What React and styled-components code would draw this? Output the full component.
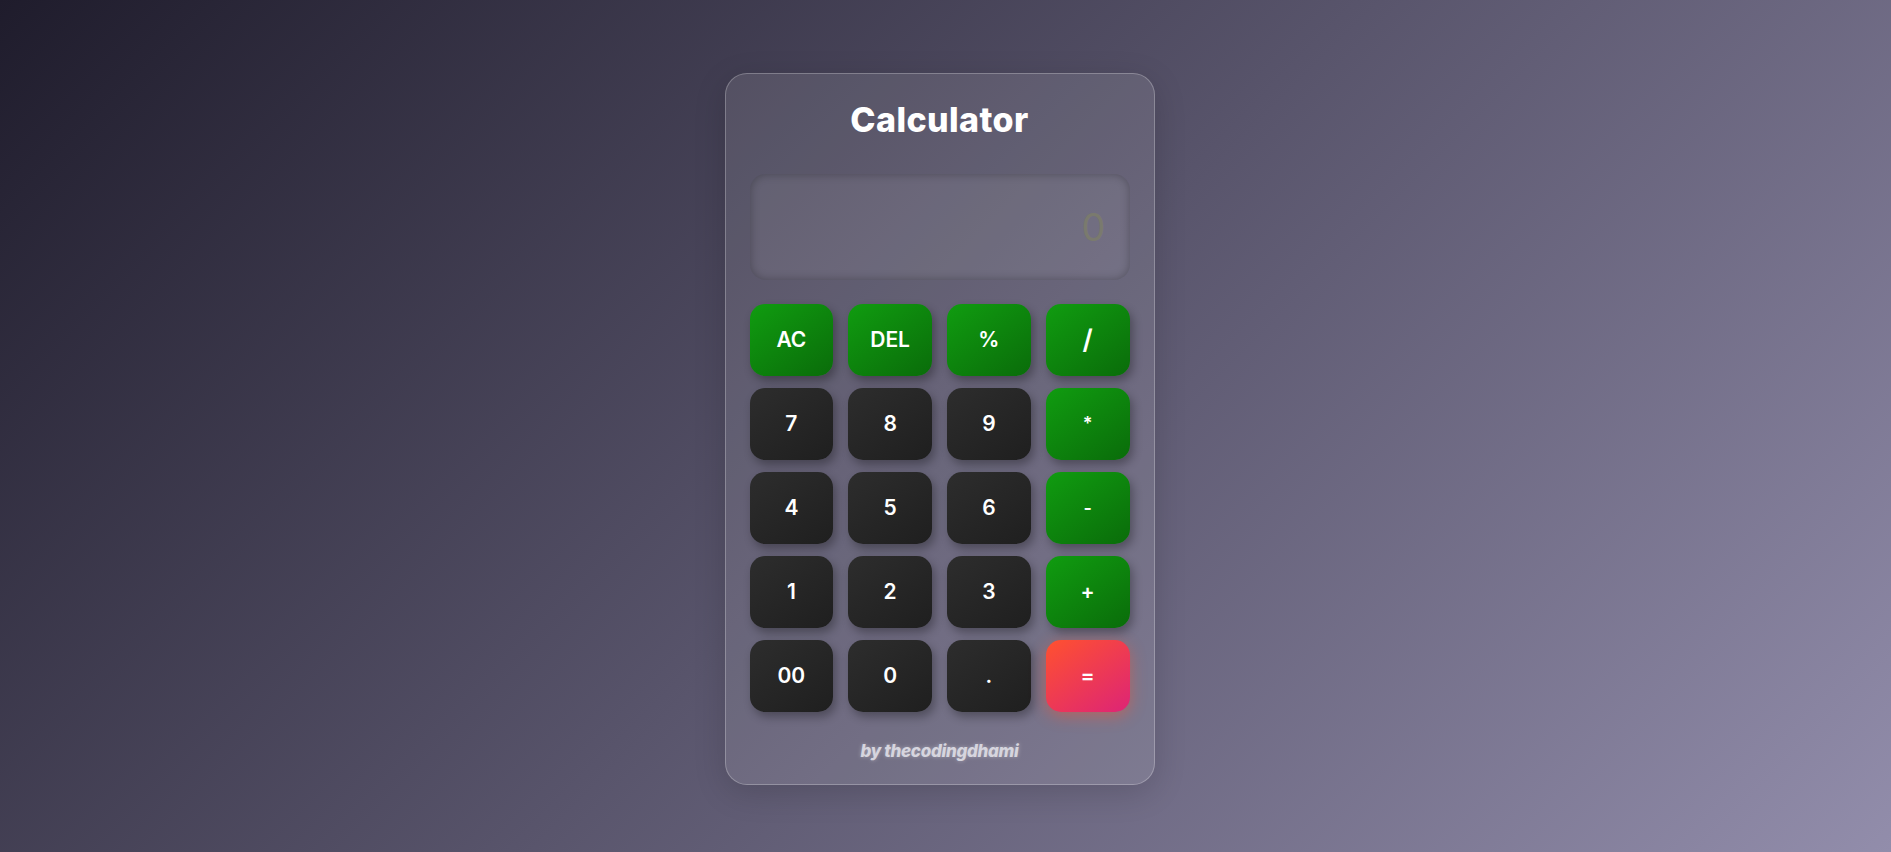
import React, { useState } from "react";
import styled, { createGlobalStyle, css } from "styled-components";

const Global = createGlobalStyle`
  html, body { margin: 0; padding: 0; }
  body {
    font-family: "Inter", "Noto Sans", sans-serif;
    background: linear-gradient(135deg, #1f1c2c 0%, #928dab 100%);
    min-height: 100vh;
    overflow: hidden;
  }
`;

const Page = styled.main`
  height: 100vh;
  box-sizing: border-box;
  display: flex;
  align-items: center;
  justify-content: center;
  padding: 5px 12px 0 0;
`;

const Card = styled.section`
  width: 430px;
  box-sizing: border-box;
  padding: 22px 24px 21px;
  border-radius: 22px;
  background: rgba(255, 255, 255, 0.1);
  border: 1px solid rgba(255, 255, 255, 0.25);
  box-shadow: 0 8px 32px rgba(0, 0, 0, 0.15);
  display: flex;
  flex-direction: column;
`;

const Title = styled.h1`
  margin: 0;
  text-align: center;
  color: #ffffff;
  font-family: "Inter", "Noto Sans", sans-serif;
  font-weight: 800;
  font-size: 34px;
  line-height: 48px;
  letter-spacing: 0.4px;
`;

const Display = styled.div`
  margin-top: 30px;
  height: 106px;
  box-sizing: border-box;
  border-radius: 16px;
  background: rgba(255, 255, 255, 0.07);
  box-shadow: inset 0 0 10px rgba(0, 0, 0, 0.28);
  display: flex;
  align-items: center;
  justify-content: flex-end;
  padding: 0 24px;
  color: #7a7a6e;
  font-family: "Inter", "Noto Sans", sans-serif;
  font-weight: 400;
  font-size: 38px;
`;

const Keys = styled.div`
  margin-top: 24px;
  display: grid;
  grid-template-columns: repeat(4, 1fr);
  grid-auto-rows: 72px;
  gap: 12px 15px;
`;

const variants = {
  num: css`
    background: linear-gradient(145deg, #2d2d2d, #1f1f1f);
    box-shadow: 3px 5px 10px rgba(0, 0, 0, 0.3);
  `,
  op: css`
    background: linear-gradient(145deg, #109c10, #0a6c0a);
    box-shadow: 3px 5px 10px rgba(0, 0, 0, 0.3);
  `,
  eq: css`
    background: linear-gradient(145deg, #ff512f, #dd2476);
    box-shadow: 0 4px 16px rgba(255, 81, 47, 0.45);
  `,
};

const Key = styled.button`
  border: none;
  border-radius: 15px;
  color: #ffffff;
  font-family: "Inter", "Noto Sans", sans-serif;
  font-weight: 600;
  font-size: ${(p) => p.$size || 21}px;
  cursor: pointer;
  ${(p) => variants[p.$kind]}
`;

const Footer = styled.p`
  margin: 27px 0 0;
  text-align: center;
  color: #d6d5de;
  font-family: "Inter", "Noto Sans", sans-serif;
  font-style: italic;
  font-weight: 800;
  font-size: 17px;
  line-height: 24px;
  letter-spacing: -0.3px;
  text-shadow: 0 0 4px rgba(255, 255, 255, 0.35);
`;

const keys = [
  ["AC", "op"], ["DEL", "op"], ["%", "op"], ["/", "op", 27],
  ["7", "num"], ["8", "num"], ["9", "num"], ["*", "op", 18],
  ["4", "num"], ["5", "num"], ["6", "num"], ["-", "op", 18],
  ["1", "num"], ["2", "num"], ["3", "num"], ["+", "op"],
  ["00", "num"], ["0", "num"], [".", "num"], ["=", "eq"],
];

export default function App() {
  const [value] = useState("0");
  return (
    <>
      <Global />
      <Page>
        <Card>
          <Title>Calculator</Title>
          <Display>{value}</Display>
          <Keys>
            {keys.map(([label, kind, size]) => (
              <Key key={label} $kind={kind} $size={size}>
                {label}
              </Key>
            ))}
          </Keys>
          <Footer>by thecodingdhami</Footer>
        </Card>
      </Page>
    </>
  );
}
